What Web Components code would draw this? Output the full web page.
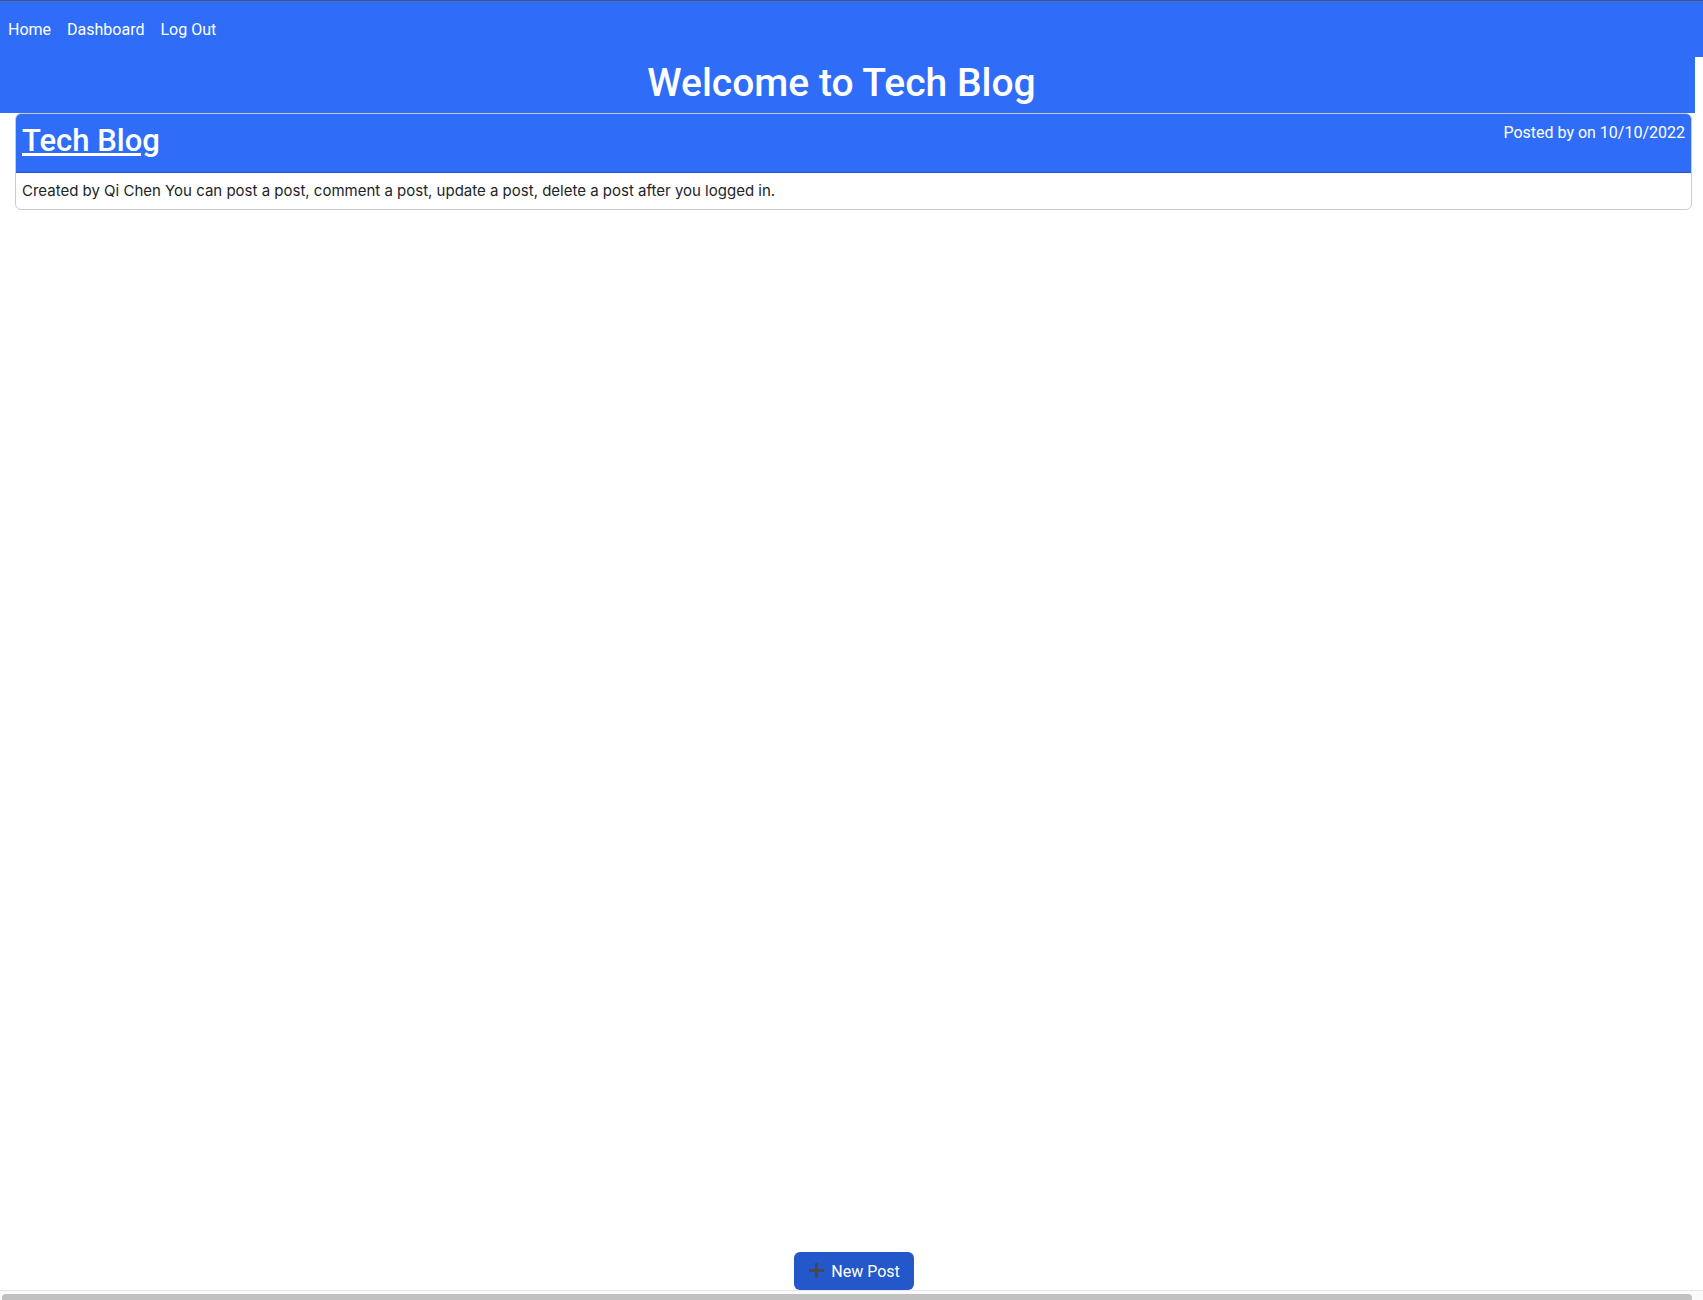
<!DOCTYPE html>
<html lang="en">
<head>
<meta charset="utf-8">
<title>Tech Blog</title>
<style>
  html, body { height: 100%; }
  body {
    margin: 0;
    background: #fff;
    color: #212529;
    font: 16px/24px Roboto, "Liberation Sans", sans-serif;
    --blue: #2f6df8;
    --blue-dark: #2457c9;
  }
</style>
</head>
<body>
<blog-page>
  <blog-nav slot="nav"></blog-nav>
  <blog-hero slot="hero">Welcome to Tech Blog</blog-hero>
  <blog-post>
    <span slot="title">Tech Blog</span>
    <span slot="meta">Posted by on 10/10/2022</span>
    Created by Qi Chen You can post a post, comment a post, update a post, delete a post after you logged in.
  </blog-post>
  <new-post-button slot="action">New Post</new-post-button>
</blog-page>
<script>
  const define = (name, html) => customElements.define(name, class extends HTMLElement {
    constructor() {
      super();
      this.attachShadow({ mode: "open" }).innerHTML = html;
    }
  });

  define("blog-page", `
    <style>
      :host { display: flex; flex-direction: column; min-height: 100%; box-sizing: border-box; border-top: 1px solid #46546f; }
      main { flex: 1; display: flex; flex-direction: column; }
      .posts { flex: 1; padding: 0 11px 0 15px; }
      .action { display: flex; justify-content: center; padding-left: 5px; }
    </style>
    <slot name="nav"></slot>
    <main>
      <slot name="hero"></slot>
      <div class="posts"><slot></slot></div>
      <div class="action"><slot name="action"></slot></div>
    </main>
    <scroll-track></scroll-track>`);

  define("blog-nav", `
    <style>
      :host { display: block; background: var(--blue); }
      nav { display: flex; gap: 16px; padding: 17px 8px 15px; }
      a { color: #fff; text-decoration: none; }
    </style>
    <nav><a href="#home">Home</a><a href="#dashboard">Dashboard</a><a href="#logout">Log Out</a></nav>`);

  define("blog-hero", `
    <style>
      :host { display: block; margin-right: 8px; padding: 2px 12px 6px 0; background: var(--blue); color: #fff; text-align: center; }
      h1 { margin: 0; font-size: 39px; line-height: 48px; font-weight: 500; }
    </style>
    <h1><slot></slot></h1>`);

  define("blog-post", `
    <style>
      :host { display: block; }
      article { border: 1px solid #cbccce; border-radius: 6px; overflow: hidden; background: #fff; }
      header { display: flex; justify-content: space-between; padding: 7px 6px 11px; border-bottom: 1px solid var(--blue-dark); background: var(--blue); color: #fff; }
      h2 { margin: 0; font-size: 31px; line-height: 40px; font-weight: 500; }
      a { color: inherit; text-decoration: underline; text-decoration-thickness: 3px; }
      p { margin: 0; padding: 6px; font-family: Inter, "Liberation Sans", sans-serif; font-size: 15px; }
    </style>
    <article>
      <header><h2><a href="#post"><slot name="title"></slot></a></h2><slot name="meta"></slot></header>
      <p><slot></slot></p>
    </article>`);

  define("new-post-button", `
    <style>
      :host { display: block; }
      button { display: flex; align-items: center; gap: 7px; padding: 8px 14px 6px 15px; border: 0; border-radius: 6px; background: var(--blue-dark); color: #fff; font: inherit; }
      svg { display: block; width: 15px; height: 15px; margin-bottom: 4px; }
    </style>
    <button type="button">
      <svg viewBox="0 0 15 15" aria-hidden="true"><path d="M6 0h3v6h6v3H9v6H6V9H0V6h6z" fill="#45484d"/></svg>
      <slot></slot>
    </button>`);

  define("scroll-track", `
    <style>
      :host { display: block; height: 6px; padding: 3px 11px 0 2px; border-top: 1px solid #e6e6e6; background: #fafafa; }
      div { height: 6px; border-radius: 4px 4px 0 0; background: #c1c1c1; }
    </style>
    <div></div>`);
</script>
</body>
</html>
